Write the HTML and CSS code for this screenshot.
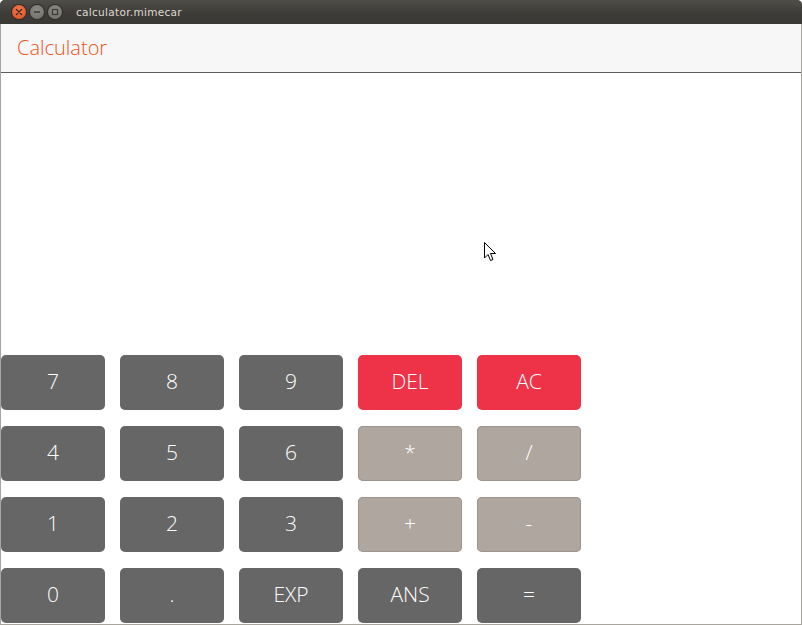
FILE: index.html
```html
<!DOCTYPE html>
<html>
<head>
<meta charset="utf-8">
<link rel="stylesheet" href="styles.css">
</head>
<body>
<div class="window">
  <div class="titlebar">
    <div class="controls">
      <span class="wbtn close">
        <svg width="14" height="14" viewBox="0 0 14 14"><path d="M4.5 4.5 L9.5 9.5 M9.5 4.5 L4.5 9.5" stroke="#3a2a20" stroke-width="1.4" stroke-linecap="round"/></svg>
      </span>
      <span class="wbtn">
        <svg width="14" height="14" viewBox="0 0 14 14"><path d="M4 7 H10" stroke="#3a3935" stroke-width="1.4"/></svg>
      </span>
      <span class="wbtn">
        <svg width="14" height="14" viewBox="0 0 14 14"><rect x="4.5" y="4.5" width="5" height="5" fill="none" stroke="#3a3935" stroke-width="1.2"/></svg>
      </span>
    </div>
    <span class="wtitle">calculator.mimecar</span>
  </div>
  <div class="content">
    <header class="header">Calculator</header>
    <div class="display"></div>
    <div class="keys">
      <button class="key num">7</button>
      <button class="key num">8</button>
      <button class="key num">9</button>
      <button class="key red">DEL</button>
      <button class="key red">AC</button>
      <button class="key num">4</button>
      <button class="key num">5</button>
      <button class="key num">6</button>
      <button class="key op">*</button>
      <button class="key op">/</button>
      <button class="key num">1</button>
      <button class="key num">2</button>
      <button class="key num">3</button>
      <button class="key op">+</button>
      <button class="key op">-</button>
      <button class="key num">0</button>
      <button class="key num">.</button>
      <button class="key num">EXP</button>
      <button class="key num">ANS</button>
      <button class="key num">=</button>
    </div>
  </div>
  <svg class="cursor" width="14" height="22" viewBox="0 0 14 22">
    <path d="M0.5 0.5 L0.5 16 L4 12.5 L6.5 18.5 L9 17.5 L6.5 11.5 L11.5 11.5 Z" fill="#fff" stroke="#000" stroke-width="1" stroke-linejoin="miter"/>
  </svg>
</div>
</body>
</html>
```

FILE: styles.css
```css
html, body {
  margin: 0;
  padding: 0;
  background: #ffffff;
}
.window {
  position: relative;
  width: 802px;
  height: 625px;
  display: flex;
  flex-direction: column;
  background: #3c3b37;
  border-radius: 5px 5px 0 0;
  overflow: hidden;
  font-family: "Open Sans", "DejaVu Sans", sans-serif;
}
.titlebar {
  height: 24px;
  flex: none;
  display: flex;
  align-items: center;
  background: linear-gradient(#4f4d48, #3c3b37 60%, #3a3935);
}
.controls {
  display: flex;
  gap: 4px;
  padding-left: 12px;
}
.wbtn {
  width: 14px;
  height: 14px;
  border-radius: 50%;
  background: radial-gradient(circle at 50% 35%, #8d8b85, #6e6c66);
  display: flex;
  box-shadow: 0 0 0 1px #2e2d2a;
}
.wbtn.close {
  background: radial-gradient(circle at 50% 35%, #f37a4c, #d94c1e);
}
.wtitle {
  margin-left: 14px;
  color: #dfdbd2;
  font-family: "DejaVu Sans", sans-serif;
  font-size: 10.5px;
  letter-spacing: 0.3px;
}
.content {
  flex: 1;
  display: flex;
  flex-direction: column;
  background: #ffffff;
  border-left: 1px solid #a8a49e;
  border-right: 1px solid #a8a49e;
  border-bottom: 1px solid #a8a49e;
}
.header {
  height: 48px;
  flex: none;
  box-sizing: border-box;
  height: 49px;
  padding-bottom: 2px;
  background: #f7f7f7;
  border-bottom: 1px solid #5c5c5c;
  color: #ea5420;
  font-size: 20px;
  font-weight: 300;
  display: flex;
  align-items: center;
  padding-left: 16px;
}
.display {
  height: 282px;
  flex: none;
}
.keys {
  display: grid;
  grid-template-columns: repeat(5, 104px);
  grid-auto-rows: 55px;
  column-gap: 15px;
  row-gap: 16px;
}
.key {
  border: none;
  border-radius: 5px;
  color: #ffffff;
  font-family: "Open Sans", "DejaVu Sans", sans-serif;
  font-size: 21px;
  font-weight: 300;
  padding: 0 0 3px 0;
  margin: 0;
}
.key.num {
  background: #666666;
}
.key.red {
  background: #ee3349;
}
.key.op {
  background: #aea69f;
  box-shadow: inset 0 0 0 1px #9c958e;
}
.cursor {
  position: absolute;
  left: 484px;
  top: 242px;
}
```
